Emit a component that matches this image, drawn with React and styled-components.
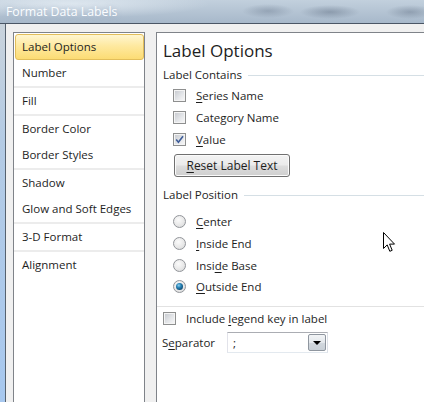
import React from "react";
import styled, { createGlobalStyle } from "styled-components";

const Global = createGlobalStyle`
  html, body { margin: 0; padding: 0; background: #f0f0f0; }
  body { width: 424px; height: 402px; overflow: hidden; }
`;

const Screen = styled.div`
  position: relative;
  width: 424px;
  height: 402px;
  overflow: hidden;
  font-family: "Open Sans", "Liberation Sans", sans-serif;
  font-size: 11.5px;
  color: #1e1e1e;
`;

const TitleBar = styled.div`
  height: 23px;
  box-sizing: border-box;
  display: flex;
  align-items: center;
  padding-left: 6px;
  color: #fbfdff;
  font-size: 12.3px;
  text-shadow: 0 0 4px rgba(150, 170, 190, 0.6);
  background:
    radial-gradient(ellipse 26px 7px at 268px 11px, rgba(110, 125, 145, 0.45), transparent),
    radial-gradient(ellipse 30px 7px at 330px 12px, rgba(100, 115, 135, 0.5), transparent),
    radial-gradient(ellipse 24px 7px at 410px 12px, rgba(100, 115, 135, 0.45), transparent),
    radial-gradient(ellipse 140px 14px at 70px 4px, rgba(235, 242, 248, 0.7), transparent),
    linear-gradient(to bottom, #c2d0dd, #a7b8ca);
`;

const Frame = styled.div`
  display: flex;
  height: 379px;
  border-top: 1px solid #4a5665;
`;

const GlassEdge = styled.div`
  flex: 0 0 5px;
  background: linear-gradient(to bottom, #c9d3dc 0%, #b4cbe4 30%, #a7c8ef 100%);
`;

const Body = styled.div`
  flex: 1 0 auto;
  min-width: 0;
  display: flex;
  align-items: flex-start;
  gap: 11px;
  padding: 8px 0 0 7px;
  background: #f0f0f0;
  border-left: 1px solid #56626f;
`;

const NavList = styled.div`
  flex: 0 0 132px;
  box-sizing: border-box;
  height: 400px;
  padding-top: 1px;
  background: #ffffff;
  border: 1px solid #7f8389;
`;

const NavItem = styled.div`
  height: 26px;
  box-sizing: border-box;
  margin-left: 1px;
  padding-left: 6px;
  line-height: 24px;
  border: 1px solid ${(p) => (p.$selected ? "#e2be5a" : "transparent")};
  border-radius: 3px;
  background: ${(p) =>
    p.$selected
      ? "linear-gradient(to bottom, #fff6d0 0%, #fee9a0 45%, #fcdc74 100%)"
      : "transparent"};
  white-space: nowrap;
`;

const NavDivider = styled.div`
  height: 2px;
  background: #ececec;
`;

const Panel = styled.div`
  flex: 0 0 280px;
  box-sizing: border-box;
  height: 400px;
  padding: 6px 0 0 6px;
  background: #ffffff;
  border: 1px solid #7f8389;
  border-right: none;
`;

const Heading = styled.div`
  font-size: 17px;
  line-height: 24px;
  height: 24px;
  margin-bottom: 4px;
  color: #1e1e1e;
`;

const SectionHeader = styled.div`
  display: flex;
  align-items: center;
  height: 16px;
  line-height: 16px;
  margin-top: ${(p) => p.$top || 0}px;
  &::after {
    content: "";
    flex: 1;
    height: 1px;
    margin-left: 6px;
    background: #d5dfe5;
  }
`;

const OptionList = styled.div`
  display: flex;
  flex-direction: column;
  margin-top: ${(p) => p.$top || 0}px;
  padding-left: ${(p) => (p.$indent === undefined ? 10 : p.$indent)}px;
`;

const OptionRow = styled.label`
  display: flex;
  align-items: center;
  gap: 10px;
  height: ${(p) => p.$h || 22}px;
  white-space: nowrap;
`;

const U = styled.span`
  text-decoration: underline;
  text-underline-offset: 2px;
`;

const Box = styled.span`
  position: relative;
  flex: 0 0 13px;
  width: 13px;
  height: 13px;
  box-sizing: border-box;
  border: 1px solid #8e8f8f;
  background: #f4f4f4;
  &::before {
    content: "";
    position: absolute;
    left: 1px;
    top: 1px;
    width: 9px;
    height: 9px;
    background: linear-gradient(135deg, #c9ccd1 0%, #e3e5e8 55%, #f5f5f6 100%);
  }
  svg {
    position: absolute;
    left: 1px;
    top: 1px;
  }
`;

const Radio = styled.span`
  position: relative;
  flex: 0 0 13px;
  width: 13px;
  height: 13px;
  box-sizing: border-box;
  border-radius: 50%;
  border: 1px solid #92959a;
  background: radial-gradient(circle at 40% 35%, #fbfbfb 0%, #e8e8e8 55%, #d2d4d6 100%);
  &::after {
    content: "";
    display: ${(p) => (p.$checked ? "block" : "none")};
    position: absolute;
    left: 2px;
    top: 2px;
    width: 7px;
    height: 7px;
    border-radius: 50%;
    background: radial-gradient(circle at 40% 35%, #8fd0f0 0%, #2a86b8 35%, #0d4a73 75%, #0a2f4d 100%);
  }
`;

const Button = styled.div`
  width: 116px;
  height: 23px;
  box-sizing: border-box;
  margin: 4px 0 0 11px;
  display: flex;
  align-items: center;
  justify-content: center;
  border: 1px solid #707070;
  border-radius: 3px;
  box-shadow: inset 0 0 0 1px #fbfbfb;
  background: linear-gradient(to bottom, #f3f3f3 0%, #ebebeb 48%, #dddddd 52%, #cfcfcf 100%);
  font-size: 12px;
`;

const FullRule = styled.div`
  height: 1px;
  margin: 8px 0 1px -6px;
  background: #e2e2e2;
`;

const FieldRow = styled.div`
  display: flex;
  align-items: center;
  height: 21px;
  margin: 2px 0 0 -1px;
`;

const FieldLabel = styled.span`
  width: 65px;
  white-space: nowrap;
`;

const Select = styled.div`
  width: 101px;
  height: 21px;
  box-sizing: border-box;
  display: flex;
  align-items: center;
  justify-content: space-between;
  padding-left: 5px;
  border: 1px solid #abadb3;
  border-color: #abadb3 #dbdfe6 #e3e9ef #e2e3ea;
  background: #ffffff;
`;

const DropButton = styled.span`
  width: 18px;
  height: 17px;
  box-sizing: border-box;
  margin-right: 1px;
  display: flex;
  align-items: center;
  justify-content: center;
  border: 1px solid #8f969f;
  border-radius: 2px;
  background: linear-gradient(to bottom, #f2f4f6 0%, #e4e8ec 50%, #d2d8de 51%, #c9d0d7 100%);
  &::after {
    content: "";
    width: 0;
    height: 0;
    border-left: 4px solid transparent;
    border-right: 4px solid transparent;
    border-top: 4px solid #000;
    margin-top: 1px;
  }
`;

const Cursor = styled.svg`
  position: absolute;
  left: 383px;
  top: 232px;
`;

const Check = () => (
  <svg width="9" height="9" viewBox="0 0 9 9">
    <path d="M1.2 4.6 L3.4 7.2 L8 1.2" fill="none" stroke="#3d5c98" strokeWidth="1.6" />
  </svg>
);

const navGroups = [
  ["Label Options", "Number"],
  ["Fill"],
  ["Border Color", "Border Styles"],
  ["Shadow", "Glow and Soft Edges"],
  ["3-D Format"],
  ["Alignment"],
];

export default function App() {
  return (
    <Screen>
      <Global />
      <TitleBar>Format Data Labels</TitleBar>
      <Frame>
        <GlassEdge />
        <Body>
          <NavList>
            {navGroups.map((g, gi) => (
              <React.Fragment key={gi}>
                {gi > 0 && <NavDivider />}
                {g.map((item) => (
                  <NavItem key={item} $selected={item === "Label Options"}>
                    {item}
                  </NavItem>
                ))}
              </React.Fragment>
            ))}
          </NavList>
          <Panel>
            <Heading>Label Options</Heading>
            <SectionHeader>Label Contains</SectionHeader>
            <OptionList $top={1}>
              <OptionRow>
                <Box />
                <span><U>S</U>eries Name</span>
              </OptionRow>
              <OptionRow>
                <Box />
                <span>Cate<U>g</U>ory Name</span>
              </OptionRow>
              <OptionRow>
                <Box><Check /></Box>
                <span><U>V</U>alue</span>
              </OptionRow>
            </OptionList>
            <Button><span><U>R</U>eset Label Text</span></Button>
            <SectionHeader $top={10}>Label Position</SectionHeader>
            <OptionList $top={8}>
              <OptionRow $h={21.7}>
                <Radio />
                <span><U>C</U>enter</span>
              </OptionRow>
              <OptionRow $h={21.7}>
                <Radio />
                <span><U>I</U>nside End</span>
              </OptionRow>
              <OptionRow $h={21.7}>
                <Radio />
                <span>Insi<U>d</U>e Base</span>
              </OptionRow>
              <OptionRow $h={21.7}>
                <Radio $checked />
                <span><U>O</U>utside End</span>
              </OptionRow>
            </OptionList>
            <FullRule />
            <OptionList $indent={-1}>
              <OptionRow>
                <Box />
                <span>Include <U>l</U>egend key in label</span>
              </OptionRow>
            </OptionList>
            <FieldRow>
              <FieldLabel>S<U>e</U>parator</FieldLabel>
              <Select>
                <span>;</span>
                <DropButton />
              </Select>
            </FieldRow>
          </Panel>
        </Body>
      </Frame>
      <Cursor width="13" height="21" viewBox="0 0 13 21">
        <path
          d="M0.5 0.5 L0.5 16.5 L4.2 12.9 L6.8 19.3 L9.2 18.3 L6.6 12.1 L11.5 12.1 Z"
          fill="#ffffff"
          stroke="#000000"
          strokeWidth="1"
          strokeLinejoin="miter"
        />
      </Cursor>
    </Screen>
  );
}
